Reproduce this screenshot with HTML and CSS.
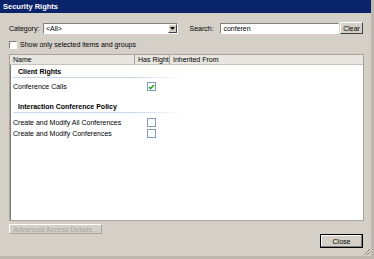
FILE: index.html
```html
<!DOCTYPE html>
<html lang="en">
<head>
  <meta charset="UTF-8" />
  <title>Security Rights</title>
  <link rel="stylesheet" href="styles.css">
</head>
<body>
  <div class="dialog">
    <div class="titlebar">Security Rights</div>

    <div class="content">
      <div class="filter-row">
        <span class="lbl">Category:</span>
        <div class="select">
          <span>&lt;All&gt;</span>
          <span class="drop"><svg width="5" height="3" viewBox="0 0 5 3"><path d="M0 0h5L2.5 3z" fill="#000"/></svg></span>
        </div>
        <span class="lbl search-lbl">Search:</span>
        <div class="textbox">conferen</div>
        <button class="btn clear-btn">Clear</button>
      </div>

      <div class="check-row">
        <span class="cb"></span>
        <span>Show only selected items and groups</span>
      </div>

      <div class="grid">
        <div class="grid-head">
          <div class="col-name">Name</div>
          <div class="col-right">Has Right</div>
          <div class="col-from">Inherited From</div>
        </div>

        <div class="group">Client Rights</div>
        <div class="row row-tall">
          <div class="col-name">Conference Calls</div>
          <div class="col-right"><span class="gcb checked"><svg width="7" height="6" viewBox="0 0 7 6"><path d="M1 3l1.5 1.5L6 1" stroke="#21a121" stroke-width="1.6" fill="none"/></svg></span></div>
        </div>

        <div class="group">Interaction Conference Policy</div>
        <div class="row first">
          <div class="col-name">Create and Modify All Conferences</div>
          <div class="col-right"><span class="gcb"></span></div>
        </div>
        <div class="row">
          <div class="col-name">Create and Modify Conferences</div>
          <div class="col-right"><span class="gcb"></span></div>
        </div>
      </div>

      <div class="footer">
        <button class="btn adv-btn" disabled>Advanced Access Details...</button>
        <button class="btn close-btn">Close</button>
      </div>
    </div>
    <div class="grip"><svg width="8" height="8" viewBox="0 0 8 8"><path d="M7 1L1 7M7 4L4 7" stroke="#8a877f" stroke-width="1"/></svg></div>
  </div>
</body>
</html>
```

FILE: styles.css
```css
* {
  margin: 0;
  padding: 0;
  box-sizing: border-box;
  font-family: 'Liberation Sans', 'DejaVu Sans', sans-serif;
  white-space: nowrap;
}

body {
  background: #d4d0c8;
  font-size: 7px;
  color: #000;
}

.dialog {
  position: relative;
  width: 374px;
  height: 259px;
  background: #d4d0c8;
  border-right: 3px solid #bcb8b0;
  border-bottom: 3px solid #bcb8b0;
}

.titlebar {
  height: 13px;
  background: #0a246a;
  color: #fff;
  font-weight: bold;
  font-size: 7.5px;
  line-height: 13px;
  padding-left: 3px;
}

.content {
  padding: 9px 8px 0 9px;
}

.filter-row {
  display: flex;
  align-items: center;
  height: 12px;
}

.lbl {
  width: 34px;
}

.select {
  width: 135px;
  height: 11px;
  background: #fff;
  border: 1px solid;
  border-color: #808080 #fff #fff #808080;
  display: flex;
  justify-content: space-between;
  align-items: center;
  padding-left: 2px;
}

.drop {
  width: 9px;
  height: 9px;
  background: #d4d0c8;
  border: 1px solid;
  border-color: #fff #404040 #404040 #fff;
  display: flex;
  align-items: center;
  justify-content: center;
}

.search-lbl {
  margin-left: 12px;
  width: 31px;
}

.textbox {
  width: 119px;
  height: 11px;
  line-height: 9px;
  background: #fff;
  border: 1px solid;
  border-color: #808080 #fff #fff #808080;
  padding-left: 2px;
}

.btn {
  background: #d4d0c8;
  border: 1px solid;
  border-color: #fff #404040 #404040 #fff;
  font-size: 7px;
  color: #000;
}

.clear-btn {
  width: 23px;
  height: 12px;
  margin-left: 1px;
}

.check-row {
  display: flex;
  align-items: center;
  margin-top: 6px;
  height: 9px;
  gap: 3px;
}

.cb {
  width: 8px;
  height: 8px;
  background: #fff;
  border: 1px solid;
  border-color: #808080 #fff #fff #808080;
}

.grid {
  margin-top: 5px;
  width: 355px;
  height: 167px;
  background: #fff;
  border: 1px solid #a8a49c;
  box-shadow: inset 1px 1px 0 #808080;
}

.grid-head {
  display: flex;
  height: 10px;
  line-height: 9px;
  background: #e8e6e0;
  border-bottom: 1px solid #c8c4bc;
}

.grid-head > div {
  padding-left: 3px;
  border-right: 1px solid #a8a49c;
}

.col-name {
  width: 125px;
}

.col-right {
  width: 35px;
}

.col-from {
  flex: 1;
}

.grid-head .col-from {
  border-right: none;
}

.group {
  font-weight: bold;
  margin-left: 3px;
  padding-left: 5px;
  width: 170px;
  height: 13px;
  line-height: 12px;
  padding-top: 1px;
  border-bottom: 1px solid transparent;
  border-image: linear-gradient(to right, #c9d7ea, #c9d7ea 70%, #fff) 1;
}

.row {
  display: flex;
  align-items: center;
  height: 11px;
}

.row-tall {
  height: 22px;
  align-items: flex-start;
  padding-top: 4px;
  line-height: 9px;
}

.row.first {
  margin-top: 4px;
}

.row .col-name {
  padding-left: 3px;
}

.row .col-right {
  padding-left: 12px;
  display: flex;
}

.gcb {
  width: 9px;
  height: 9px;
  border: 1px solid #7f9db9;
  background: #fff;
  display: flex;
  align-items: center;
  justify-content: center;
}

.footer {
  display: flex;
  justify-content: space-between;
  align-items: flex-start;
  margin-top: 3px;
}

.adv-btn {
  width: 93px;
  height: 10px;
  color: #a8a49c;
  border-color: #fff #a8a49c #a8a49c #fff;
}

.close-btn {
  width: 43px;
  height: 14px;
  margin-top: 10px;
  border: 1px solid #000;
  box-shadow: inset -1px -1px 0 #808080, inset 1px 1px 0 #fff;
}

.grip {
  position: absolute;
  right: 0;
  bottom: 0;
  width: 8px;
  height: 8px;
}
```
